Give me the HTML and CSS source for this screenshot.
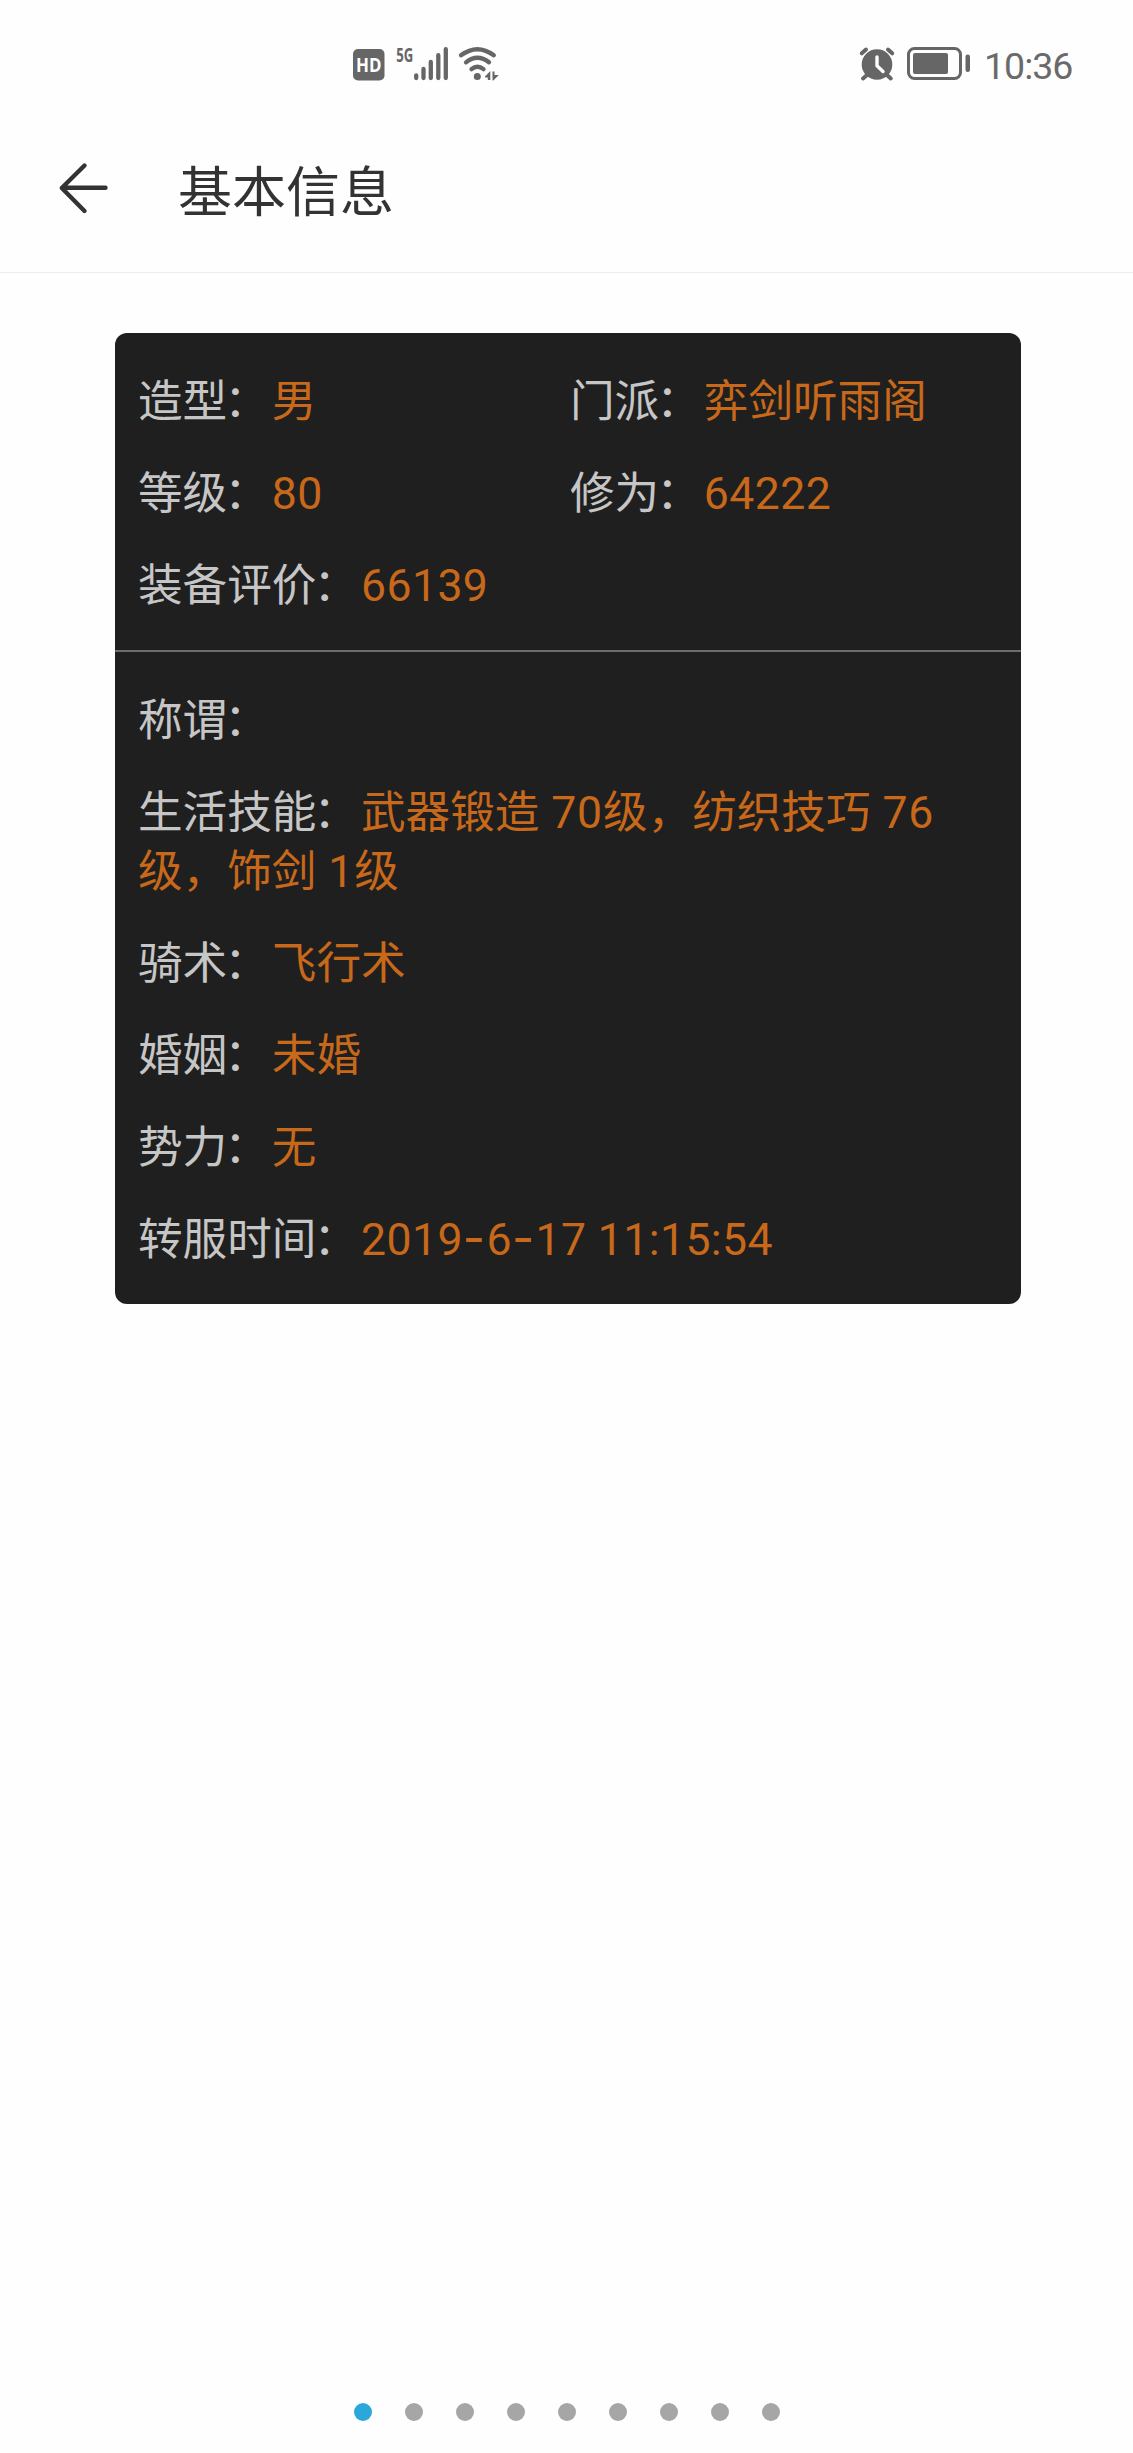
FILE: index.html
```html
<!DOCTYPE html>
<html lang="zh-CN">
<head>
<meta charset="utf-8">
<title>基本信息</title>
<link rel="stylesheet" href="styles.css">
</head>
<body>
<div class="screen">
  <div class="status">
    <svg class="signals" width="152" height="56" viewBox="350 28 152 56" fill="#666">
      <rect x="353" y="49" width="31.500" height="31.500" rx="5"/>
      <text class="hd" x="356" y="71.800" textLength="25.500" lengthAdjust="spacingAndGlyphs">HD</text>
      <text class="net" x="396.300" y="61.500" textLength="17" lengthAdjust="spacingAndGlyphs">5G</text>
      <g stroke="#666" stroke-width="4.300" stroke-linecap="round">
        <path d="M416.200 75.300V78M423.500 69V78M430.800 62V78M438.300 55.200V78M445.800 49.200V78"/>
      </g>
      <g fill="none" stroke="#666" stroke-width="4.300" stroke-linecap="round">
        <path d="M461 55.300Q477.300 43.200 493.800 55.300"/>
        <path d="M466 62.300Q477.300 53.200 489 62.300"/>
        <path d="M471.500 69.200Q477.300 64.200 483.500 69.200"/>
      </g>
      <circle cx="477.300" cy="76.600" r="3.500"/>
      <path d="M485 76.500L490.300 71V80H487.800V77.500H485ZM492.500 71.500H494.500V75H498.800L493.300 80.500H492.500Z"/>
    </svg>
    <svg class="power" width="116" height="56" viewBox="857 28 116 56" fill="#666">
      <circle cx="877" cy="64.500" r="15.300"/>
      <path d="M861.800 53.300L866 49.500M892.200 53.300L888 49.500M867 75L863 78.500M887 75L890.800 78.500" stroke="#666" stroke-width="4" stroke-linecap="round"/>
      <path d="M877 57V65.800L883 71.500" fill="none" stroke="#fff" stroke-width="3.400" stroke-linecap="round" stroke-linejoin="round"/>
      <rect x="908.500" y="48.500" width="52" height="30" rx="6" fill="none" stroke="#666" stroke-width="3"/>
      <rect x="913" y="53" width="35" height="21" rx="2"/>
      <rect x="965.500" y="54.500" width="4.500" height="17.500" rx="2.200"/>
    </svg>
    <span class="time">10:36</span>
  </div>
  <header class="header">
    <svg class="back" width="50" height="54" viewBox="58 162 50 54" fill="none" stroke="#333" stroke-width="4.400" stroke-linecap="round" stroke-linejoin="round">
      <path d="M84.500 165.500L61.800 188L84.500 211M62 187.700H105.500"/>
    </svg>
    <h1 class="title">基本信息</h1>
  </header>
  <main class="card">
    <section class="summary">
      <p class="row">造型<span class="colon">：</span><span class="value">男</span></p>
      <p class="row">门派<span class="colon">：</span><span class="value">弈剑听雨阁</span></p>
      <p class="row">等级<span class="colon">：</span><span class="value num">80</span></p>
      <p class="row">修为<span class="colon">：</span><span class="value num">64222</span></p>
      <p class="row">装备评价<span class="colon">：</span><span class="value num">66139</span></p>
    </section>
    <section class="details">
      <p class="row">称谓<span class="colon">：</span></p>
      <p class="row">生活技能<span class="colon">：</span><span class="value">武器锻造<span class="count"> 70</span>级，纺织技巧<span class="count"> 76</span>级，饰剑<span class="count"> 1</span>级</span></p>
      <p class="row">骑术<span class="colon">：</span><span class="value">飞行术</span></p>
      <p class="row">婚姻<span class="colon">：</span><span class="value">未婚</span></p>
      <p class="row">势力<span class="colon">：</span><span class="value">无</span></p>
      <p class="row">转服时间<span class="colon">：</span><span class="value num">2019<span class="dash">-</span>6<span class="dash">-</span>17 11:15:54</span></p>
    </section>
  </main>
  <nav class="pager">
    <i class="dot active"></i><i class="dot"></i><i class="dot"></i><i class="dot"></i><i class="dot"></i><i class="dot"></i><i class="dot"></i><i class="dot"></i><i class="dot"></i>
  </nav>
</div>
</body>
</html>
```

FILE: styles.css
```css
* { box-sizing: border-box; }
body, h1, p { margin: 0; }
body {
  background: #fefefe;
  font-family: Roboto, "Noto Sans CJK SC", sans-serif;
}
.screen {
  height: 2453px;
  display: flex;
  flex-direction: column;
}
.status {
  height: 104px;
  padding: 28px 50px 0 350px;
  display: flex;
  align-items: flex-start;
}
.status svg { flex: none; }
.power { margin-left: 355px; }
.hd { font: 700 20px "Open Sans", sans-serif; fill: #fff; }
.net { font: 700 20px "Open Sans", sans-serif; }
.time {
  margin: 16px 0 0 11px;
  font-size: 37.5px;
  line-height: 44px;
  letter-spacing: -1px;
  color: #6a6a6a;
  white-space: nowrap;
}
.header {
  height: 169px;
  padding: 58px 58px 0;
  border-bottom: 1px solid #ededed;
  display: flex;
  align-items: flex-start;
}
.title {
  margin-left: 70px;
  margin-top: -8px;
  font-size: 54px;
  font-weight: 400;
  line-height: 80px;
  color: #333;
}
.card {
  width: 906px;
  height: 971px;
  margin: 60px 0 0 115px;
  background: #1f1f1f;
  border-radius: 12px;
  font-size: 44.6px;
  line-height: 59px;
  color: #c6c6c6;
}
.summary {
  display: grid;
  grid-template-columns: 432px 1fr;
  row-gap: 33px;
  padding: 40px 23px 34px;
  border-bottom: 2px solid #6c6c6c;
}
.details {
  display: flex;
  flex-direction: column;
  gap: 33px;
  padding: 40px 50px 34px 23px;
}
.colon { margin: 0 3px 0 -3px; }
.value { color: #c7681a; }
.num { letter-spacing: 0.4px; }
.count { letter-spacing: 0.8px; }
.dash {
  font-family: Inter, sans-serif;
  font-size: 49px;
  line-height: 0;
  letter-spacing: 1px;
}
.pager {
  margin-top: auto;
  padding-bottom: 32px;
  display: flex;
  justify-content: center;
  gap: 33px;
}
.dot {
  width: 18px;
  height: 18px;
  border-radius: 50%;
  background: #a6a6a6;
}
.active { background: #2ba7dc; }
```
